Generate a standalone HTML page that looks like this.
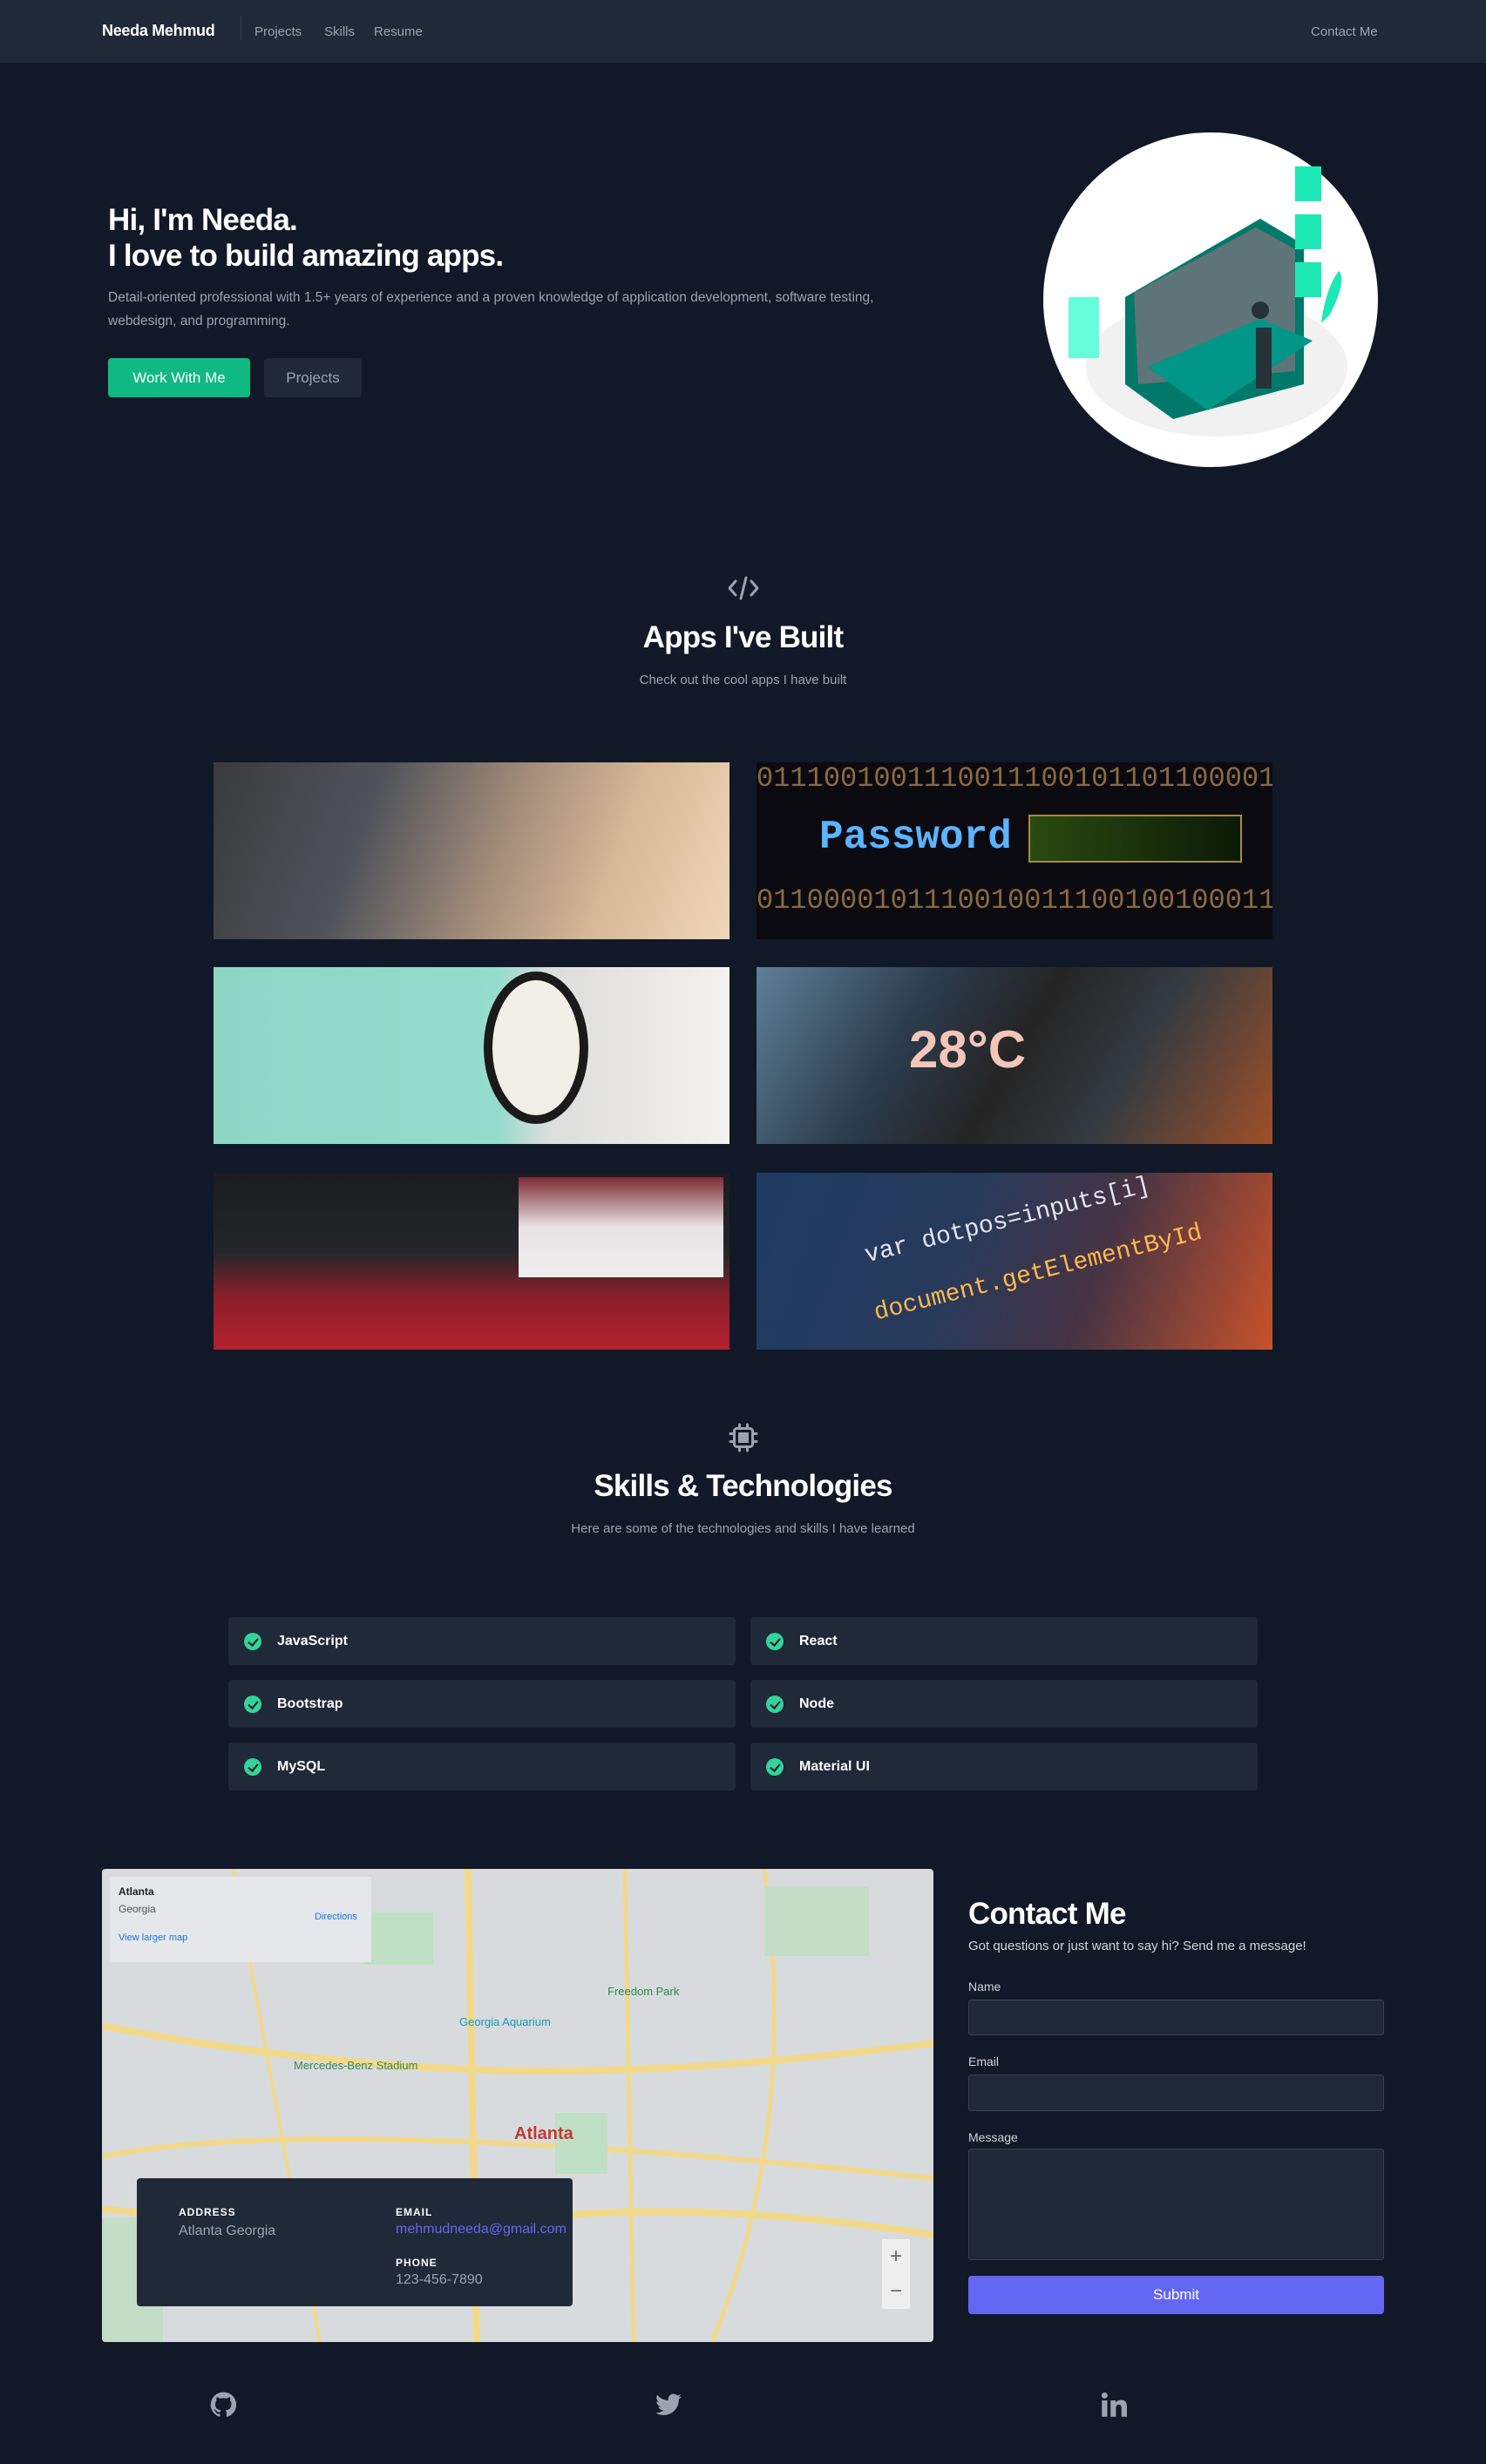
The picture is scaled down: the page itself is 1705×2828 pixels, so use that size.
<!DOCTYPE html>
<html><head><meta charset="utf-8"><style>
*{box-sizing:border-box;margin:0;padding:0}
body{width:1705px;height:2828px;background:#111827;font-family:"Liberation Sans",sans-serif;color:#fff;position:relative;overflow:hidden}
.a{position:absolute}
nav{position:absolute;left:0;top:0;width:1705px;height:72px;background:#1f2937}
.nl{color:#9ca3af;font-size:15px;top:28px}
.gray{color:#9ca3af}
h1{font-size:35px;font-weight:bold;line-height:41px;letter-spacing:-0.8px}
.btn{border-radius:4px;font-size:17px;display:flex;align-items:center;justify-content:center}
.img{position:absolute;width:592px;height:203px;overflow:hidden}
.card{position:absolute;width:582px;height:55px;background:#1f2937;border-radius:4px;display:flex;align-items:center;padding-left:18px;font-size:16px;font-weight:bold}
.chk{width:20px;height:20px;border-radius:50%;background:#34d399;margin-right:18px;position:relative}
.chk:after{content:"";position:absolute;left:7px;top:4px;width:5px;height:9px;border:solid #111827;border-width:0 2px 2px 0;transform:rotate(40deg)}
.inp{position:absolute;left:1111px;width:477px;background:#1f2937;border:1px solid #374151;border-radius:3px}
.lbl{position:absolute;left:1111px;font-size:14px;color:#d1d5db}
.title{position:absolute;width:1705px;text-align:center;font-size:35px;font-weight:bold;letter-spacing:-0.8px}
.sub{position:absolute;width:1705px;text-align:center;font-size:15px;color:#9ca3af}
</style></head><body>
<nav>
<div class="a" style="left:117px;top:25px;font-size:18px;font-weight:bold;letter-spacing:-0.3px">Needa Mehmud</div>
<div class="a" style="left:276px;top:18px;width:1px;height:28px;background:#374151"></div>
<div class="a nl" style="left:292px">Projects</div>
<div class="a nl" style="left:372px">Skills</div>
<div class="a nl" style="left:429px">Resume</div>
<div class="a nl" style="left:1504px">Contact Me</div>
</nav>

<h1 class="a" style="left:124px;top:232px">Hi, I'm Needa.<br>I love to build amazing apps.</h1>
<p class="a gray" style="left:124px;top:328px;width:960px;font-size:15.5px;line-height:27px">Detail-oriented professional with 1.5+ years of experience and a proven knowledge of application development, software testing, webdesign, and programming.</p>
<div class="a btn" style="left:124px;top:411px;width:163px;height:45px;background:#10b981;color:#fff">Work With Me</div>
<div class="a btn" style="left:303px;top:411px;width:112px;height:45px;background:#1f2937;color:#9ca3af">Projects</div>

<svg class="a" style="left:1196px;top:151px" width="386" height="386" viewBox="0 0 386 386">
<circle cx="193" cy="193" r="192" fill="#fff"/>
<ellipse cx="200" cy="270" rx="150" ry="80" fill="#f1f1f1"/>
<polygon points="95,190 250,100 300,130 300,290 150,330 95,290" fill="#00796b"/>
<polygon points="105,185 245,110 290,135 290,275 110,290" fill="#5f7478"/>
<polygon points="120,270 250,215 310,240 190,320" fill="#009688"/>
<rect x="290" y="40" width="30" height="40" fill="#1de9b6"/><rect x="290" y="95" width="30" height="40" fill="#1de9b6"/><rect x="290" y="150" width="30" height="40" fill="#1de9b6"/>
<rect x="30" y="190" width="35" height="70" fill="#64ffda"/>
<rect x="245" y="225" width="18" height="70" fill="#263238"/><circle cx="250" cy="205" r="10" fill="#263238"/>
<path d="M330 210 q20 -40 10 -50 q-15 20 -20 60z" fill="#1de9b6"/>
</svg>

<svg class="a" style="left:834px;top:660px" width="38" height="30" viewBox="0 0 38 30" fill="none" stroke="#9ca3af" stroke-width="3" stroke-linecap="round" stroke-linejoin="round"><path d="M10 7 3 15l7 8M28 7l7 8-7 8M22 3 16 27"/></svg>
<div class="title" style="top:712px">Apps I've Built</div>
<div class="sub" style="top:772px">Check out the cool apps I have built</div>

<div class="img" style="left:245px;top:875px;background:linear-gradient(110deg,#3a3b3d 0%,#50535a 30%,#a38d7a 55%,#d6b796 75%,#f0d7b9 100%)"></div>
<div class="img" style="left:868px;top:875px;background:#0b0a10"><div class="a" style="left:72px;top:60px;font:bold 46px 'Liberation Mono',monospace;color:#5ab4ff">Password</div><div class="a" style="left:312px;top:60px;width:245px;height:55px;border:2px solid #a58c40;background:linear-gradient(90deg,#2a4a10,#0c1a06)"></div><div class="a" style="left:0;top:0;font:32px 'Liberation Mono',monospace;color:#8a6a40">0111001001110011100101101100001</div><div class="a" style="left:0;top:140px;font:32px 'Liberation Mono',monospace;color:#8a6a40">0110000101110010011100100100011</div></div>
<div class="img" style="left:245px;top:1110px;background:linear-gradient(90deg,#8ed6c4 0%,#94dccb 55%,#ddd 65%,#f4f2ee 100%)"><div class="a" style="left:310px;top:5px;width:120px;height:175px;border-radius:50%;background:#f2f0e6;border:10px solid #1a1a1a"></div></div>
<div class="img" style="left:868px;top:1110px;background:linear-gradient(120deg,#5e7f96 0%,#2b3c4c 30%,#252424 50%,#343b40 70%,#a04f28 100%)"><div class="a" style="left:175px;top:60px;font-size:60px;font-weight:bold;color:#f4c6b8">28°C</div></div>
<div class="img" style="left:245px;top:1346px;background:linear-gradient(180deg,#1b1c20 0%,#25262a 45%,#8a1e2a 70%,#b3202e 100%)"><div class="a" style="left:350px;top:5px;width:235px;height:115px;background:linear-gradient(180deg,#7a2a32,#e8e3e5 50%,#eee)"></div></div>
<div class="img" style="left:868px;top:1346px;background:linear-gradient(110deg,#1f3b63 0%,#283a5a 40%,#463344 65%,#c7522a 100%)"><div class="a" style="left:120px;top:40px;font:28px 'Liberation Mono',monospace;color:#e5e5f5;transform:rotate(-14deg)">var dotpos=inputs[i]</div><div class="a" style="left:130px;top:100px;font:28px 'Liberation Mono',monospace;color:#ffb84d;transform:rotate(-14deg)">document.getElementById</div></div>

<svg class="a" style="left:835px;top:1632px" width="36" height="36" viewBox="0 0 24 24" fill="none" stroke="#9ca3af" stroke-width="2" stroke-linecap="round"><rect x="5" y="5" width="14" height="14" rx="2"/><rect x="9" y="9" width="6" height="6" fill="#9ca3af"/><path d="M9 2v3M15 2v3M9 19v3M15 19v3M2 9h3M2 15h3M19 9h3M19 15h3"/></svg>
<div class="title" style="top:1686px">Skills &amp; Technologies</div>
<div class="sub" style="top:1746px">Here are some of the technologies and skills I have learned</div>

<div class="card" style="left:262px;top:1856px"><span class="chk"></span>JavaScript</div>
<div class="card" style="left:861px;top:1856px"><span class="chk"></span>React</div>
<div class="card" style="left:262px;top:1928px"><span class="chk"></span>Bootstrap</div>
<div class="card" style="left:861px;top:1928px"><span class="chk"></span>Node</div>
<div class="card" style="left:262px;top:2000px"><span class="chk"></span>MySQL</div>
<div class="card" style="left:861px;top:2000px"><span class="chk"></span>Material UI</div>

<div class="a" style="left:117px;top:2145px;width:954px;height:543px;background:#d8dbde;border-radius:4px;overflow:hidden">
<svg class="a" style="left:0;top:0" width="954" height="543" fill="none">
<path d="M0 180 Q200 220 420 230 T954 200" stroke="#f3d98a" stroke-width="8"/>
<path d="M0 390 Q300 420 500 400 T954 420" stroke="#f3d98a" stroke-width="8"/>
<path d="M420 0 L430 543" stroke="#f3d98a" stroke-width="8"/>
<path d="M0 330 Q250 280 954 355" stroke="#f3d98a" stroke-width="6"/>
<path d="M600 0 L610 543" stroke="#f3d98a" stroke-width="5"/>
<path d="M150 0 L250 543" stroke="#f3d98a" stroke-width="4"/>
<path d="M760 0 Q800 300 700 543" stroke="#f3d98a" stroke-width="5"/>
<rect x="300" y="50" width="80" height="60" fill="#bfe0c4"/><rect x="520" y="280" width="60" height="70" fill="#bfe0c4"/><rect x="0" y="400" width="70" height="143" fill="#c4ddc7"/><rect x="760" y="20" width="120" height="80" fill="#c4ddc7"/>
<text x="473" y="310" font-family="Liberation Sans" font-size="20" font-weight="bold" fill="#c5392f">Atlanta</text>
<text x="410" y="180" font-family="Liberation Sans" font-size="13" fill="#1a9ab5">Georgia Aquarium</text>
<text x="220" y="230" font-family="Liberation Sans" font-size="13" fill="#2f8a4e">Mercedes-Benz Stadium</text>
<text x="580" y="145" font-family="Liberation Sans" font-size="13" fill="#2f8a4e">Freedom Park</text>
</svg>
<div class="a" style="left:9px;top:9px;width:300px;height:98px;background:#e5e7eb;padding:10px 10px;font-size:12px;color:#222"><div style="font-weight:bold">Atlanta</div><div style="color:#555;margin-top:6px">Georgia</div><div style="color:#1a73e8;margin-top:20px;font-size:11px">View larger map</div><div class="a" style="left:235px;top:40px;color:#1a73e8;font-size:11px">Directions</div></div>
<div class="a" style="left:40px;top:355px;width:500px;height:147px;background:#1f2937;border-radius:4px">
<div class="a" style="left:48px;top:32px;font-size:12px;font-weight:bold;letter-spacing:1px">ADDRESS</div>
<div class="a gray" style="left:48px;top:52px;font-size:16px">Atlanta Georgia</div>
<div class="a" style="left:297px;top:32px;font-size:12px;font-weight:bold;letter-spacing:1px">EMAIL</div>
<div class="a" style="left:297px;top:50px;font-size:16px;color:#6366f1">mehmudneeda@gmail.com</div>
<div class="a" style="left:297px;top:90px;font-size:12px;font-weight:bold;letter-spacing:1px">PHONE</div>
<div class="a gray" style="left:297px;top:108px;font-size:16px">123-456-7890</div>
</div>
<div class="a" style="left:895px;top:425px;width:32px;height:80px;background:#eee;color:#666;font-size:24px;text-align:center;line-height:40px">+<br>−</div>
</div>

<div class="a" style="left:1111px;top:2177px;font-size:35px;font-weight:bold;letter-spacing:-0.8px">Contact Me</div>
<div class="a" style="left:1111px;top:2225px;font-size:15px;color:#d1d5db">Got questions or just want to say hi? Send me a message!</div>
<div class="lbl" style="top:2272px">Name</div>
<div class="inp" style="top:2295px;height:41px"></div>
<div class="lbl" style="top:2358px">Email</div>
<div class="inp" style="top:2381px;height:42px"></div>
<div class="lbl" style="top:2445px">Message</div>
<div class="inp" style="top:2466px;height:128px"></div>
<div class="a btn" style="left:1111px;top:2612px;width:477px;height:44px;background:#6366f1;font-size:17px;font-weight:500">Submit</div>

<svg class="a" style="left:241px;top:2745px" width="30" height="30" viewBox="0 0 24 24" fill="#9ca3af"><path d="M12 .5a11.5 11.5 0 0 0-3.6 22.4c.6.1.8-.3.8-.6v-2c-3.2.7-3.9-1.5-3.900-1.500-.5-1.3-1.3-1.7-1.3-1.7-1-.7.1-.7.1-.7 1.2.1 1.8 1.2 1.8 1.2 1 1.8 2.8 1.3 3.5 1 .1-.8.4-1.3.7-1.6-2.6-.3-5.3-1.3-5.3-5.7 0-1.3.5-2.3 1.2-3.1-.1-.3-.5-1.5.1-3.1 0 0 1-.3 3.2 1.2a11 11 0 0 1 5.8 0c2.2-1.5 3.2-1.2 3.2-1.2.6 1.6.2 2.8.1 3.1.8.8 1.2 1.9 1.2 3.1 0 4.4-2.7 5.4-5.3 5.7.4.4.8 1.1.8 2.2v3.2c0 .3.2.7.8.6A11.5 11.5 0 0 0 12 .5z"/></svg>
<svg class="a" style="left:752px;top:2747px" width="30" height="26" viewBox="0 0 24 20" fill="#9ca3af"><path d="M24 2.4a9.8 9.8 0 0 1-2.8.8A4.9 4.9 0 0 0 23.3.4a9.9 9.9 0 0 1-3.1 1.2A4.9 4.9 0 0 0 11.8 6 14 14 0 0 1 1.7.9a4.9 4.9 0 0 0 1.5 6.6A4.9 4.9 0 0 1 1 6.9a4.9 4.9 0 0 0 3.9 4.8 4.9 4.9 0 0 1-2.2.1 4.9 4.9 0 0 0 4.6 3.4A9.9 9.9 0 0 1 0 17.3 14 14 0 0 0 7.5 19.5c9.1 0 14-7.5 14-14v-.6A10 10 0 0 0 24 2.4z"/></svg>
<svg class="a" style="left:1263px;top:2745px" width="30" height="30" viewBox="0 0 24 24" fill="#9ca3af"><rect x="1" y="8" width="5" height="15"/><circle cx="3.5" cy="3.5" r="2.8"/><path d="M9 8h4.7v2.1c.7-1.2 2.3-2.5 4.7-2.5 5 0 5.6 3.1 5.6 7.2V23h-5v-7.2c0-1.7 0-3.9-2.4-3.9s-2.7 1.8-2.7 3.8V23H9z"/></svg>
</body></html>
